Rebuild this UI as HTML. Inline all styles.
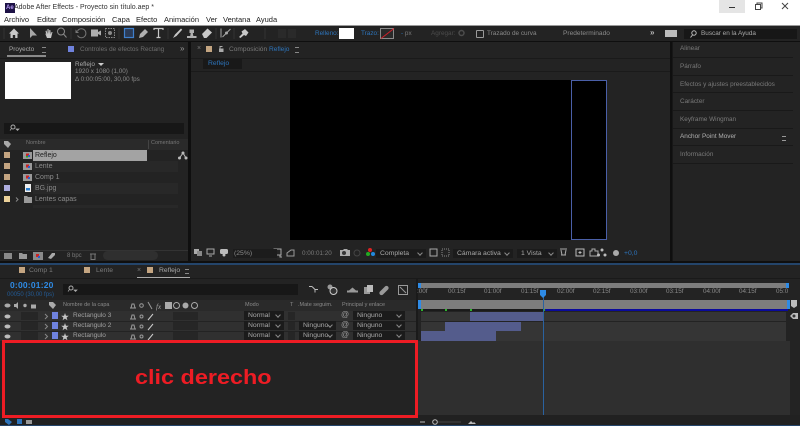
<!DOCTYPE html>
<html><head><meta charset="utf-8"><style>
html,body{margin:0;padding:0;background:#0f0f0f;width:800px;height:426px;overflow:hidden}
body{position:relative;font-family:"Liberation Sans",sans-serif;font-size:6.4px;color:#8e8e8e}
.a{position:absolute}
.t{position:absolute;white-space:nowrap;line-height:10px;font-size:6.4px}
svg{position:absolute;overflow:visible}
.p{position:absolute;background:#232323}
.sw{position:absolute;width:6px;height:6px;background:#c4a581}
.dd{position:absolute;background:#1b1b1b;color:#a8a8a8;height:9px;line-height:9px;font-size:6.8px;padding-left:4px;box-sizing:border-box}
.dd:after{content:"";position:absolute;right:4px;top:2px;width:3px;height:3px;border:solid #8a8a8a;border-width:0 1px 1px 0;transform:rotate(45deg)}
.blue{color:#2d74bb}
.m{position:absolute;top:14px;font-size:7.5px;color:#222;line-height:11px;white-space:nowrap}
</style></head><body>
<!-- title bar -->
<div class="a" style="left:0;top:0;width:800px;height:25px;background:#fff"></div>
<div class="a" style="left:5px;top:3px;width:10px;height:10px;background:#1d1246"></div>
<div class="t" style="left:6px;top:3px;font-size:6px;color:#b79cf5;font-weight:bold">Ae</div>
<div class="t" style="left:14px;top:2px;font-size:7px;color:#333;line-height:11px">Adobe After Effects - Proyecto sin título.aep *</div>
<div class="m" style="left:4px">Archivo</div>
<div class="m" style="left:37px">Editar</div>
<div class="m" style="left:62px">Composición</div>
<div class="m" style="left:112px">Capa</div>
<div class="m" style="left:136px">Efecto</div>
<div class="m" style="left:164px">Animación</div>
<div class="m" style="left:206px">Ver</div>
<div class="m" style="left:223px">Ventana</div>
<div class="m" style="left:256px">Ayuda</div>
<div class="a" style="left:719px;top:0;width:26px;height:13px;background:#e5e5e5"></div>
<svg style="left:0;top:0" width="800" height="25"><path d="M729 7.500h6" stroke="#333" fill="none"/><path d="M755.500 4.500h5v5h-5zM757 4.500v-1.500h5v5h-1.500" stroke="#444" fill="none"/><path d="M782 3l6 6M788 3l-6 6" stroke="#444" fill="none"/></svg>

<!-- toolbar -->
<div class="a" style="left:0;top:25px;width:800px;height:1px;background:#9a9a9a"></div>
<div class="a" style="left:0;top:26px;width:800px;height:15px;background:#232323"></div>
<svg style="left:0;top:26px" width="300" height="15">
<path d="M9 7.500L14 2.500L19 7.500H17.500V12H15.200V9H12.800V12H10.500V7.500z" fill="#c8c8c8"/>
<path d="M30 2V12L32.500 9.500L37 9.500z" fill="#a8a8a8"/>
<path d="M45 7l2 5h4l1.500-6h-1l-.7 2.500-.5-4.500h-1l-.3 4-.5-5h-1l0 5-1-3.500-1 .5.800 3.500-1.300-1.500z" fill="#c8c8c8"/>
<circle cx="61" cy="5.500" r="3.500" stroke="#8a8a8a" fill="none"/><path d="M63.500 8l3 3.500" stroke="#8a8a8a"/>
<path d="M77.500 5a4.500 4.500 0 1 1 0 4.500" stroke="#777" fill="none"/><path d="M75.500 3.500v3.500h3.500z" fill="#777"/>
<path d="M91 3.500h7v7h-7zM98 6l3-1.500v5l-3-1.500z" fill="#b0b0b0"/>
<rect x="105.500" y="2.500" width="9" height="9" stroke="#8a8a8a" stroke-dasharray="1.500 1" fill="none"/><circle cx="110" cy="7" r="2" fill="#8a8a8a"/>
<rect x="124.500" y="2.500" width="9" height="9" fill="#2b3b57" stroke="#3f7fcc" stroke-width="1.200"/>
<path d="M139 12l1-4 5-5 3 3-5 5z" fill="#b0b0b0"/>
<path d="M154 4V2.500h9V4M158.500 2.500V11.500M156.500 11.500h4" stroke="#c8c8c8" fill="none" stroke-width="1.200"/>
<path d="M173 12l2-3.500 6-6 1.200 1.200-5.700 6.300z" fill="#c8c8c8"/>
<path d="M187 12h9.500v-2h-3.200l-.5-3h1.200v-3.500h-4.500v3.500h1.200l-.5 3h-3.200z" fill="#b0b0b0"/>
<path d="M202 8l5.500-5.500 4.500 4-5.500 5.500h-2.500z" fill="#c8c8c8"/>
<path d="M221 2.500v9M222.500 11l8-8" stroke="#a8a8a8" fill="none"/><circle cx="226.500" cy="7" r="1.500" fill="#a8a8a8"/>
<path d="M239 11l3.500-3.500-1-2 3.500-2.500 3.500 3.500-2.500 3.500-2-1-3.500 3z" fill="#c8c8c8"/>
<path d="M4 2v11M71 2v11M119 2v11M168 2v11M216 2v11M234 2v11M265 2v11" stroke="#333"/>
<rect x="278" y="3" width="8" height="9" fill="#2a2a2a"/><rect x="288" y="3" width="8" height="9" fill="#2a2a2a"/>
</svg>
<div class="t blue" style="left:315px;top:29px">Relleno:</div>
<div class="a" style="left:339px;top:28px;width:15px;height:11px;background:#fff"></div>
<div class="t blue" style="left:361px;top:29px">Trazo:</div>
<svg style="left:380px;top:28px" width="15" height="11"><rect x=".5" y=".5" width="13" height="10" fill="#2a2a2a" stroke="#8a8a8a"/><path d="M1 10.500L14 .5" stroke="#d0202a"/></svg>
<div class="t" style="left:401px;top:29px;color:#777"><span class="blue">-</span> px</div>
<div class="t" style="left:431px;top:29px;color:#4c4c4c">Agregar:</div>
<svg style="left:458px;top:29px" width="8" height="8"><circle cx="3.500" cy="4" r="2.500" stroke="#4c4c4c" fill="none" stroke-width="1.500"/></svg>
<div class="a" style="left:476px;top:30px;width:6px;height:6px;border:1px solid #9a9a9a;border-radius:1px"></div>
<div class="t" style="left:487px;top:29px;color:#8a8a8a">Trazado de curva</div>
<div class="t" style="left:563px;top:29px;font-size:6.600px;color:#8a8a8a">Predeterminado</div>
<div class="t" style="left:650px;top:28px;font-size:8px;color:#bbb;font-weight:bold">»</div>
<div class="a" style="left:665px;top:30px;width:12px;height:7px;background:#bdbdbd"></div>
<div class="a" style="left:684px;top:29px;width:113px;height:10px;background:#171717"></div>
<svg style="left:689px;top:29px" width="10" height="10"><circle cx="5" cy="4" r="2.200" stroke="#bbb" fill="none"/><path d="M3.500 6l-2 2.500" stroke="#bbb"/></svg>
<div class="t" style="left:701px;top:29px;color:#a8a8a8">Buscar en la Ayuda</div>

<!-- project panel -->
<div class="p" style="left:0;top:42px;width:188px;height:219px"></div>
<div class="t" style="left:9px;top:45px;color:#a8a8a8">Proyecto</div>
<div class="a" style="left:42px;top:47px;width:4px;height:4px;border-top:1px solid #888;border-bottom:1px solid #888"></div>
<div class="a" style="left:7px;top:55px;width:39px;height:2px;background:#8a8a8a"></div>
<div class="a" style="left:68px;top:46px;width:6px;height:6px;background:#6f82dd"></div>
<div class="t" style="left:80px;top:45px;color:#6e6e6e">Controles de efectos Rectang</div>
<div class="t" style="left:180px;top:44px;font-size:8px;color:#999">»</div>
<div class="a" style="left:0;top:58px;width:188px;height:1px;background:#1a1a1a"></div>
<div class="a" style="left:5px;top:62px;width:66px;height:37px;background:#fff"></div>
<div class="t" style="left:75px;top:60px;color:#a8a8a8">Reflejo</div>
<div class="a" style="left:98px;top:63px;border:3px solid transparent;border-top:3px solid #ccc"></div>
<div class="t" style="left:75px;top:67px;font-size:6.300px;color:#8a8a8a">1920 x 1080 (1,00)</div>
<div class="t" style="left:75px;top:75px;font-size:6.300px;color:#8a8a8a">Δ 0:00:05:00, 30,00 fps</div>
<div class="a" style="left:4px;top:123px;width:180px;height:11px;background:#171717"></div>
<svg style="left:9px;top:124px" width="12" height="9"><circle cx="4" cy="3" r="2" stroke="#aaa" fill="none"/><path d="M2.500 4.500l-1.500 2M7 5h3l-1.500 1.500z" stroke="#aaa" fill="#aaa" stroke-width=".7"/></svg>
<div class="a" style="left:0;top:139px;width:188px;height:11px;background:#2a2a2a"></div>
<svg style="left:4px;top:140px" width="8" height="9"><path d="M0 1h4l3 3-3 4-4-4z" fill="#aaa"/></svg>
<div class="t" style="left:26px;top:139px;font-size:5.500px;color:#777;line-height:9px">Nombre</div>
<div class="t" style="left:151px;top:139px;font-size:5.500px;color:#777;line-height:9px">Comentario</div>
<div class="a" style="left:148px;top:140px;width:1px;height:9px;background:#444"></div>
<div class="a" style="left:33px;top:150px;width:114px;height:11px;background:#a3a3a3"></div>
<div class="a" style="left:33px;top:161px;width:145px;height:47px;background:repeating-linear-gradient(#282828 0 11px,#232323 11px 22px)"></div>
<div class="sw" style="left:4px;top:152px"></div><div class="sw" style="left:4px;top:163px"></div><div class="sw" style="left:4px;top:174px"></div>
<div class="sw" style="left:4px;top:185px;background:#aeaee0"></div><div class="sw" style="left:4px;top:196px;background:#ecd29a"></div>
<svg style="left:0;top:150px" width="190" height="60">
<rect x="23" y="2" width="9" height="7" fill="#999"/><rect x="26" y="3.500" width="3" height="3" fill="#c22"/><rect x="28" y="5" width="2" height="2" fill="#2a5fd0"/><rect x="26" y="6" width="2" height="1.500" fill="#2a2"/>
<g transform="translate(0,11)"><rect x="23" y="2" width="9" height="7" fill="#999"/><rect x="26" y="3.500" width="3" height="3" fill="#c22"/><rect x="28" y="5" width="2" height="2" fill="#2a5fd0"/></g>
<g transform="translate(0,22)"><rect x="23" y="2" width="9" height="7" fill="#999"/><rect x="26" y="3.500" width="3" height="3" fill="#c22"/><rect x="28" y="5" width="2" height="2" fill="#2a5fd0"/></g>
<rect x="25" y="34" width="6" height="8" fill="#eee"/><rect x="26" y="38" width="4" height="2.500" fill="#2a7fd0"/>
<path d="M24 46h3l1 1h4v6h-8z" fill="#999"/>
<path d="M16 47.500l2 2-2 2" stroke="#888" fill="none"/>
<circle cx="183" cy="3" r="1.500" fill="#bbb"/><circle cx="179.500" cy="8" r="1.500" fill="#bbb"/><circle cx="186" cy="8" r="1.500" fill="#bbb"/><path d="M183 3l-3.500 5M183 3l3 5" stroke="#bbb"/>
</svg>
<div class="t" style="left:35px;top:151px;font-size:7px;color:#1f1f1f">Reflejo</div>
<div class="t" style="left:35px;top:162px;font-size:7px;color:#8a8a8a">Lente</div>
<div class="t" style="left:35px;top:173px;font-size:7px;color:#8a8a8a">Comp 1</div>
<div class="t" style="left:35px;top:184px;font-size:7px;color:#8a8a8a">BG.jpg</div>
<div class="t" style="left:35px;top:195px;font-size:7px;color:#8a8a8a">Lentes capas</div>
<div class="a" style="left:0;top:250px;width:188px;height:1px;background:#333"></div>
<svg style="left:0;top:251px" width="110" height="10">
<rect x="4" y="2" width="8" height="6" fill="#888"/><path d="M19 2h3l1 1h4v5h-8z" fill="#999"/>
<rect x="33" y="1" width="10" height="8" fill="#8a8a8a"/><rect x="36" y="3" width="3" height="3" fill="#c22"/><rect x="38" y="5" width="2" height="2" fill="#2a5fd0"/>
<path d="M48 7l4-5h3v2l-4 4z" fill="#aaa"/><path d="M90 3h6M91 3.500v5h4v-5" stroke="#777" fill="none"/>
</svg>
<div class="t" style="left:67px;top:251px;font-size:6px;color:#7a7a7a">8 bpc</div>
<div class="a" style="left:103px;top:251px;width:55px;height:9px;background:#2f2f2f;border-radius:5px"></div>

<!-- comp panel -->
<div class="p" style="left:191px;top:42px;width:479px;height:219px"></div>
<div class="t" style="left:197px;top:44px;font-size:7px;color:#777">×</div>
<div class="sw" style="left:206px;top:46px"></div>
<svg style="left:218px;top:45px" width="7" height="8"><rect x="1" y="3.500" width="4.500" height="3.500" fill="#aaa"/><path d="M2 3.500v-2h2.500" stroke="#aaa" fill="none"/></svg>
<div class="t" style="left:229px;top:45px;font-size:6.600px;color:#7a7a7a">Composición <span class="blue">Reflejo</span></div>
<div class="a" style="left:295px;top:47px;width:4px;height:4px;border-top:1px solid #888;border-bottom:1px solid #888"></div>
<div class="a" style="left:191px;top:58px;width:479px;height:1px;background:#1a1a1a"></div>
<div class="a" style="left:203px;top:59px;width:39px;height:10px;background:#191919"></div>
<div class="t blue" style="left:208px;top:59px;font-size:6.800px">Reflejo</div>
<div class="a" style="left:191px;top:71px;width:479px;height:1px;background:#1a1a1a"></div>
<div class="a" style="left:290px;top:80px;width:317px;height:160px;background:#000"></div>
<div class="a" style="left:571px;top:80px;width:34px;height:158px;border:1px solid #4a5fa8"></div>
<div class="a" style="left:191px;top:245px;width:479px;height:16px;background:#232323"></div>
<svg style="left:190px;top:245px" width="480" height="16">
<rect x="4" y="4" width="5" height="5" fill="#aaa"/><rect x="7" y="6" width="5" height="5" fill="#888"/>
<rect x="17" y="4" width="7" height="5" fill="none" stroke="#aaa"/><path d="M19 11h3" stroke="#aaa"/>
<rect x="30" y="4" width="8" height="5" rx="1.500" fill="#bbb"/><circle cx="34" cy="10" r="1.500" fill="#bbb"/>
<path d="M84 4h7v6h-7zM90 10v2h2" stroke="#aaa" fill="none"/>
<path d="M97 11v-3l4-3h3v6z" stroke="#999" fill="none"/>
<path d="M150 5h3l1-1h3l1 1h2v6h-10z" fill="#aaa"/><circle cx="154" cy="8" r="2" fill="#333"/>
<circle cx="167" cy="8" r="3" stroke="#444" fill="none"/>
<circle cx="180" cy="5" r="2" fill="#d22"/><circle cx="178" cy="9" r="2" fill="#2a2"/><circle cx="183" cy="9" r="2" fill="#28d"/>
<rect x="240" y="4" width="7" height="7" stroke="#aaa" fill="none"/><rect x="252" y="4" width="7" height="7" stroke="#888" fill="none" stroke-dasharray="1 1"/>
<path d="M370 4h7M371 10h5M371 5l1 5M376 5l-1 5" stroke="#aaa" fill="none"/>
<rect x="386" y="4" width="8" height="7" stroke="#bbb" fill="none"/><path d="M390 6v3M388.500 7.500h3" stroke="#bbb"/>
<path d="M400 6h2v-2h3v2h3v5h-8z" stroke="#aaa" fill="none"/>
<circle cx="412" cy="5" r="1.500" fill="#bbb"/><circle cx="408.500" cy="10" r="1.500" fill="#bbb"/><circle cx="415" cy="10" r="1.500" fill="#bbb"/>
<circle cx="426" cy="8" r="3" fill="#aaa"/>
</svg>
<div class="a" style="left:233px;top:249px;width:44px;height:9px;background:#1c1c1c"></div>
<div class="t" style="left:234px;top:249px;font-size:6.800px;color:#8a8a8a;line-height:9px">(25%)</div>
<div class="t" style="left:302px;top:249px;font-size:6.300px;color:#7a7a7a;line-height:9px">0:00:01:20</div>
<div class="dd" style="left:376px;top:249px;width:50px">Completa</div>
<div class="dd" style="left:453px;top:249px;width:60px">Cámara activa</div>
<div class="dd" style="left:517px;top:249px;width:40px">1 Vista</div>
<div class="t" style="left:624px;top:249px;font-size:6.800px;color:#2d74bb;line-height:9px">+0,0</div>

<!-- right panel -->
<div class="p" style="left:672px;top:42px;width:128px;height:219px"></div>
<div class="a" style="left:672px;top:42px;width:1px;height:219px;background:#171717"></div>
<div class="t" style="left:680px;top:44px;color:#7a7a7a">Alinear</div>
<div class="a" style="left:673px;top:57px;width:120px;height:1px;background:#191919"></div>
<div class="t" style="left:680px;top:62px;color:#7a7a7a">Párrafo</div>
<div class="a" style="left:673px;top:75px;width:120px;height:1px;background:#191919"></div>
<div class="t" style="left:680px;top:80px;color:#7a7a7a">Efectos y ajustes preestablecidos</div>
<div class="a" style="left:673px;top:92px;width:120px;height:1px;background:#191919"></div>
<div class="t" style="left:680px;top:97px;color:#7a7a7a">Carácter</div>
<div class="a" style="left:673px;top:110px;width:120px;height:1px;background:#191919"></div>
<div class="t" style="left:680px;top:115px;color:#7a7a7a">Keyframe Wingman</div>
<div class="a" style="left:673px;top:128px;width:120px;height:1px;background:#191919"></div>
<div class="t" style="left:680px;top:132px;color:#b0b0b0">Anchor Point Mover</div>
<div class="a" style="left:782px;top:136px;width:4px;height:3px;border-top:1px solid #999;border-bottom:1px solid #999"></div>
<div class="a" style="left:673px;top:145px;width:120px;height:1px;background:#191919"></div>
<div class="t" style="left:680px;top:150px;color:#7a7a7a">Información</div>
<div class="a" style="left:673px;top:163px;width:120px;height:1px;background:#191919"></div>

<!-- timeline -->
<div class="a" style="left:0;top:263px;width:800px;height:2px;background:#24456b"></div>
<div class="p" style="left:0;top:265px;width:800px;height:161px"></div>
<div class="sw" style="left:19px;top:267px"></div>
<div class="t" style="left:29px;top:266px;color:#7a7a7a;font-size:6.800px">Comp 1</div>
<div class="sw" style="left:84px;top:267px"></div>
<div class="t" style="left:96px;top:266px;color:#7a7a7a;font-size:6.800px">Lente</div>
<div class="t" style="left:137px;top:266px;font-size:7px;color:#777">×</div>
<div class="sw" style="left:147px;top:267px"></div>
<div class="t" style="left:159px;top:266px;color:#a8a8a8;font-size:6.800px">Reflejo</div>
<div class="a" style="left:185px;top:269px;width:4px;height:3px;border-top:1px solid #888;border-bottom:1px solid #888"></div>
<div class="a" style="left:137px;top:277px;width:53px;height:1px;background:#aaa"></div>
<div class="a" style="left:0;top:278px;width:800px;height:1px;background:#1a1a1a"></div>
<div class="t" style="left:10px;top:280px;font-size:8.500px;color:#2e8be6;font-weight:bold;letter-spacing:.2px;line-height:11px">0:00:01:20</div>
<div class="t" style="left:7px;top:291px;font-size:6px;color:#235a94;line-height:8px">00050 (30,00 fps)</div>
<div class="a" style="left:63px;top:284px;width:235px;height:11px;background:#171717"></div>
<svg style="left:67px;top:285px" width="12" height="9"><circle cx="4" cy="3" r="2" stroke="#aaa" fill="none"/><path d="M2.500 4.500l-1.500 2M7 5h3l-1.500 1.500z" stroke="#aaa" fill="#aaa" stroke-width=".7"/></svg>
<svg style="left:300px;top:282px" width="110" height="15">
<path d="M9 4.500h3M12 4.500l3 3M15 7.500h3M15 7.500v3" stroke="#bbb" fill="none"/>
<circle cx="30" cy="5" r="2.500" fill="#999"/><circle cx="33.500" cy="9" r="3.500" stroke="#ccc" fill="#333"/>
<path d="M47 10.500h11v-2h-2l-3.500-3-3.500 3h-2z" fill="#999"/>
<rect x="64" y="5" width="6" height="7" fill="#999"/><rect x="67" y="3" width="6" height="7" fill="#bbb"/>
<path d="M80 9.500l5-5a2 2 0 0 1 3 3l-5 5a2 2 0 0 1-3-3z" fill="#999"/>
<rect x="98.500" y="3.500" width="9" height="9" stroke="#999" fill="none"/><path d="M100 5l6 6" stroke="#999"/>
</svg>
<!-- layer header -->
<div class="a" style="left:0;top:300px;width:416px;height:11px;background:#2a2a2a"></div>
<svg style="left:0;top:300px" width="210" height="42">
<g fill="#aaa"><ellipse cx="7.500" cy="5.500" rx="3" ry="2"/><path d="M14 4h2l2-2v7l-2-2h-2z"/><circle cx="25" cy="5.500" r="1.700"/><rect x="31" y="4.500" width="5" height="4"/></g>
<path d="M49 2h4l3 3-3 4-4-4z" fill="#aaa"/>
<g stroke="#999" fill="none"><path d="M130 8h6M131 8l1-4h2l1 4"/><circle cx="141.500" cy="5.500" r="1.800"/><path d="M148 2l4 7"/></g>
<text x="156" y="9" font-size="7" fill="#aaa" font-style="italic" font-family="Liberation Serif">fx</text>
<rect x="165" y="2" width="7" height="7" fill="#aaa"/><circle cx="176.500" cy="5.500" r="3" stroke="#aaa" fill="none"/><circle cx="185.500" cy="5.500" r="3" fill="#aaa"/><circle cx="194.500" cy="5.500" r="3" stroke="#aaa" fill="none"/>
<ellipse cx="7.500" cy="16.500" rx="3" ry="2" fill="#bbb"/><ellipse cx="7.500" cy="26.500" rx="3" ry="2" fill="#bbb"/><ellipse cx="7.500" cy="36.500" rx="3" ry="2" fill="#bbb"/>
<g stroke="#888" fill="none"><path d="M45 14l2.500 2.500-2.500 2.500M45 24l2.500 2.500-2.500 2.500M45 34l2.500 2.500-2.500 2.500"/></g>
<g fill="#c4c4c4"><path d="M65 13l1 2.700 2.800 0-2.200 1.800.8 2.700-2.400-1.600-2.400 1.600.8-2.700-2.200-1.800 2.800 0z"/><path d="M65 23l1 2.700 2.800 0-2.200 1.800.8 2.700-2.400-1.600-2.400 1.600.8-2.700-2.200-1.800 2.800 0z"/><path d="M65 33l1 2.700 2.800 0-2.200 1.800.8 2.700-2.400-1.600-2.400 1.600.8-2.700-2.200-1.800 2.800 0z"/></g>
</svg>
<div class="t" style="left:63px;top:300px;font-size:5.500px;color:#8a8a8a;line-height:11px">Nombre de la capa</div>
<div class="t" style="left:245px;top:300px;font-size:5.500px;color:#8a8a8a;line-height:11px">Modo</div>
<div class="t" style="left:290px;top:300px;font-size:5.500px;color:#8a8a8a;line-height:11px">T</div>
<div class="t" style="left:298px;top:300px;font-size:5.500px;color:#8a8a8a;line-height:11px">.Mate seguim.</div>
<div class="t" style="left:342px;top:300px;font-size:5.500px;color:#8a8a8a;line-height:11px">Principal y enlace</div>
<!-- layer rows -->
<div class="a" style="left:0;top:311px;width:416px;height:30px;background:#303030"></div>
<div class="a" style="left:0;top:320.500px;width:416px;height:1px;background:#232323"></div>
<div class="a" style="left:0;top:330.500px;width:416px;height:1px;background:#232323"></div>
<div class="a" style="left:21px;top:312px;width:17px;height:8px;background:#262626"></div>
<div class="a" style="left:21px;top:322px;width:17px;height:8px;background:#262626"></div>
<div class="a" style="left:21px;top:332px;width:17px;height:8px;background:#262626"></div>
<div class="a" style="left:173px;top:312px;width:25px;height:8px;background:#262626"></div>
<div class="a" style="left:173px;top:322px;width:25px;height:8px;background:#262626"></div>
<div class="a" style="left:173px;top:332px;width:25px;height:8px;background:#262626"></div>
<svg style="left:0;top:300px" width="210" height="42">
<ellipse cx="7.500" cy="16.500" rx="3" ry="2" fill="#bbb"/><ellipse cx="7.500" cy="26.500" rx="3" ry="2" fill="#bbb"/><ellipse cx="7.500" cy="36.500" rx="3" ry="2" fill="#bbb"/>
<g stroke="#888" fill="none"><path d="M45 14l2.500 2.500-2.500 2.500M45 24l2.500 2.500-2.500 2.500M45 34l2.500 2.500-2.500 2.500"/></g>
<g fill="#c4c4c4"><path d="M65 13l1 2.700 2.800 0-2.200 1.800.8 2.700-2.400-1.600-2.400 1.600.8-2.700-2.200-1.800 2.800 0z"/><path d="M65 23l1 2.700 2.800 0-2.200 1.800.8 2.700-2.400-1.600-2.400 1.600.8-2.700-2.200-1.800 2.800 0z"/><path d="M65 33l1 2.700 2.800 0-2.200 1.800.8 2.700-2.400-1.600-2.400 1.600.8-2.700-2.200-1.800 2.800 0z"/></g>
<g stroke="#999" fill="none"><path d="M130 19h6M131 19l1-4h2l1 4M130 29h6M131 29l1-4h2l1 4M130 39h6M131 39l1-4h2l1 4"/><circle cx="141.500" cy="16.500" r="1.500"/><circle cx="141.500" cy="26.500" r="1.500"/><circle cx="141.500" cy="36.500" r="1.500"/></g>
<path d="M148 20l5-6M148 30l5-6M148 40l5-6" stroke="#ccc"/>
</svg>
<div class="sw" style="left:52px;top:312px;width:6px;height:7px;background:#6f82dd"></div>
<div class="sw" style="left:52px;top:322px;width:6px;height:7px;background:#6f82dd"></div>
<div class="sw" style="left:52px;top:332px;width:6px;height:7px;background:#6f82dd"></div>
<div class="t" style="left:73px;top:311px;font-size:6.500px;color:#a0a0a0">Rectangulo 3</div>
<div class="t" style="left:73px;top:321px;font-size:6.500px;color:#a0a0a0">Rectangulo 2</div>
<div class="t" style="left:73px;top:331px;font-size:6.500px;color:#a0a0a0">Rectangulo</div>
<div class="dd" style="left:244px;top:311px;width:40px">Normal</div>
<div class="dd" style="left:244px;top:321px;width:40px">Normal</div>
<div class="dd" style="left:244px;top:331px;width:40px">Normal</div>
<div class="a" style="left:288px;top:312px;width:7px;height:8px;background:#262626"></div>
<div class="a" style="left:288px;top:322px;width:7px;height:8px;background:#262626"></div>
<div class="a" style="left:288px;top:332px;width:7px;height:8px;background:#262626"></div>
<div class="dd" style="left:299px;top:321px;width:37px">Ninguno</div>
<div class="dd" style="left:299px;top:331px;width:37px">Ninguno</div>
<div class="dd" style="left:353px;top:311px;width:52px">Ninguno</div>
<div class="dd" style="left:353px;top:321px;width:52px">Ninguno</div>
<div class="dd" style="left:353px;top:331px;width:52px">Ninguno</div>
<div class="t" style="left:341px;top:310px;font-size:8px;color:#999">@</div>
<div class="t" style="left:341px;top:320px;font-size:8px;color:#999">@</div>
<div class="t" style="left:341px;top:330px;font-size:8px;color:#999">@</div>
<!-- timeline right -->
<div class="a" style="left:416px;top:279px;width:2px;height:147px;background:#1a1a1a"></div>
<div class="a" style="left:420px;top:283px;width:367px;height:5px;background:#7d7d7d"></div>
<div class="a" style="left:418px;top:283px;width:3px;height:5px;background:#2e8be6"></div>
<div class="a" style="left:786px;top:283px;width:3px;height:5px;background:#2e8be6"></div>
<div class="t" style="left:417px;top:288px;font-size:6.300px;color:#8a8a8a;line-height:8px">:00f</div>
<div class="t" style="left:448px;top:288px;font-size:6.300px;color:#8a8a8a;line-height:8px">00:15f</div>
<div class="t" style="left:484px;top:288px;font-size:6.300px;color:#8a8a8a;line-height:8px">01:00f</div>
<div class="t" style="left:521px;top:288px;font-size:6.300px;color:#8a8a8a;line-height:8px">01:15f</div>
<div class="t" style="left:557px;top:288px;font-size:6.300px;color:#8a8a8a;line-height:8px">02:00f</div>
<div class="t" style="left:593px;top:288px;font-size:6.300px;color:#8a8a8a;line-height:8px">02:15f</div>
<div class="t" style="left:630px;top:288px;font-size:6.300px;color:#8a8a8a;line-height:8px">03:00f</div>
<div class="t" style="left:666px;top:288px;font-size:6.300px;color:#8a8a8a;line-height:8px">03:15f</div>
<div class="t" style="left:703px;top:288px;font-size:6.300px;color:#8a8a8a;line-height:8px">04:00f</div>
<div class="t" style="left:739px;top:288px;font-size:6.300px;color:#8a8a8a;line-height:8px">04:15f</div>
<div class="t" style="left:776px;top:288px;font-size:6.300px;color:#8a8a8a;line-height:8px">05:0</div>
<div class="a" style="left:420px;top:300px;width:368px;height:9px;background:#7d7d7d"></div>
<div class="a" style="left:418px;top:300px;width:3px;height:9px;background:#2e8be6"></div>
<div class="a" style="left:787px;top:300px;width:3px;height:9px;background:#2e8be6"></div>
<div class="a" style="left:420px;top:309px;width:123px;height:2px;background:#1a1a1a"></div>
<div class="a" style="left:543px;top:309px;width:245px;height:2px;background:#0a0a9c"></div>
<div class="a" style="left:421px;top:309px;width:2px;height:2px;background:#2db52d"></div>
<div class="a" style="left:445px;top:309px;width:2px;height:2px;background:#2db52d"></div>
<div class="a" style="left:470px;top:309px;width:2px;height:2px;background:#2db52d"></div>
<div class="a" style="left:543px;top:309px;width:2px;height:2px;background:#2db52d"></div>
<div class="a" style="left:418px;top:341px;width:372px;height:74px;background:#2f2f2f"></div>
<div class="a" style="left:421px;top:312px;width:365px;height:9px;background:#353535"></div>
<div class="a" style="left:421px;top:322px;width:365px;height:9px;background:#353535"></div>
<div class="a" style="left:421px;top:331px;width:365px;height:10px;background:#353535"></div>
<div class="a" style="left:470px;top:312px;width:74px;height:9px;background:#545c8c"></div>
<div class="a" style="left:445px;top:322px;width:76px;height:9px;background:#545c8c"></div>
<div class="a" style="left:421px;top:331px;width:75px;height:10px;background:#545c8c"></div>
<div class="a" style="left:543px;top:293px;width:1px;height:123px;background:#2a62a0"></div>
<svg style="left:539px;top:290px" width="8" height="9"><path d="M1 0h6v5l-3 3-3-3z" fill="#2e8be6"/></svg>
<svg style="left:789px;top:300px" width="11" height="22"><path d="M2 0h6v6l-3 2-3-2z" fill="#bbb"/><path d="M1 16l3-3h5v6h-5z" fill="#bbb"/><circle cx="5" cy="16" r="1.500" fill="#333"/></svg>
<div class="a" style="left:0;top:415px;width:800px;height:11px;background:#212121"></div>
<!-- red box -->
<div class="a" style="left:2px;top:340px;width:410px;height:72px;border:3px solid #ed1c24;background:#232323"></div>
<div class="t" style="left:135px;top:366px;font-size:20px;line-height:24px;font-weight:bold;color:#ed1c24;transform:scaleX(1.17);transform-origin:0 0">clic derecho</div>
<svg style="left:0;top:418px" width="500" height="8">
<path d="M5 1h3l4 3-3 3-4-3z" fill="#2d74bb"/><rect x="17" y="1" width="5" height="5" fill="#2d74bb"/><path d="M26 2h6v4h-6z" fill="#999"/>
<path d="M420 4h5" stroke="#bbb"/><circle cx="435" cy="4" r="2.300" stroke="#bbb" fill="none"/><path d="M438 4h23" stroke="#444"/><path d="M468 6l3-3 2 2 1-1 2 2z" fill="#bbb"/>
</svg>
<div class="a" style="left:0;top:425px;width:800px;height:1px;background:#24456b"></div>
</body></html>
